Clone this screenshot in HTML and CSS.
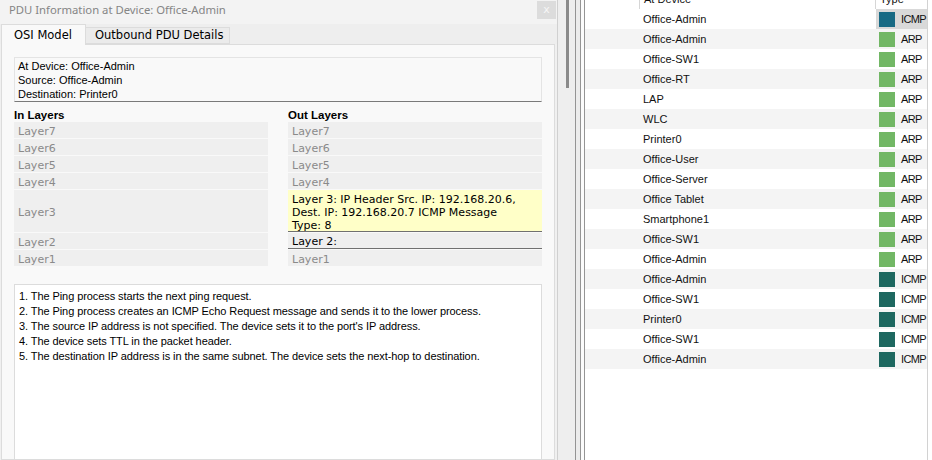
FILE: index.html
```html
<!DOCTYPE html>
<html lang="en">
<head>
<meta charset="utf-8">
<title>PDU Information</title>
<link rel="stylesheet" href="styles.css">
</head>
<body>
<div class="screen">
  <section class="dialog">
    <header class="titlebar">
      <span class="title">PDU Information at Device: Office-Admin</span>
      <button class="close" type="button">x</button>
    </header>
    <nav class="tabs">
      <div class="tab active">OSI Model</div>
      <div class="tab">Outbound PDU Details</div>
    </nav>
    <div class="panel">
      <div class="info">
        <div>At Device: Office-Admin</div>
        <div>Source: Office-Admin</div>
        <div>Destination: Printer0</div>
      </div>
      <div class="layers">
        <div class="col">
          <h3 class="col-title">In Layers</h3>
          <div class="layer">Layer7</div>
          <div class="layer">Layer6</div>
          <div class="layer">Layer5</div>
          <div class="layer">Layer4</div>
          <div class="layer tall">Layer3</div>
          <div class="layer">Layer2</div>
          <div class="layer">Layer1</div>
        </div>
        <div class="col">
          <h3 class="col-title">Out Layers</h3>
          <div class="layer">Layer7</div>
          <div class="layer">Layer6</div>
          <div class="layer">Layer5</div>
          <div class="layer">Layer4</div>
          <div class="layer tall active-3">Layer 3: IP Header Src. IP: 192.168.20.6,<br>Dest. IP: 192.168.20.7 ICMP Message<br>Type: 8</div>
          <div class="layer active-2">Layer 2:</div>
          <div class="layer">Layer1</div>
        </div>
      </div>
      <div class="log">
        <div>1. The Ping process starts the next ping request.</div>
        <div>2. The Ping process creates an ICMP Echo Request message and sends it to the lower process.</div>
        <div>3. The source IP address is not specified. The device sets it to the port's IP address.</div>
        <div>4. The device sets TTL in the packet header.</div>
        <div>5. The destination IP address is in the same subnet. The device sets the next-hop to destination.</div>
      </div>
    </div>
  </section>

  <div class="gutter">
    <div class="track"><div class="thumb"></div></div>
    <div class="rule"></div>
    <div class="pad-a"></div>
    <div class="rule"></div>
    <div class="pad-b"></div>
    <div class="rule"></div>
  </div>

  <section class="events">
    <div class="list">
      <div class="row head"><div class="c1"></div><div class="c2">At Device</div><div class="c3">Type</div></div>
      <div class="row"><div class="c1"></div><div class="c2">Office-Admin</div><div class="c3 sel"><span class="sw icmp-a"></span><span class="t">ICMP</span></div></div>
      <div class="row alt"><div class="c1"></div><div class="c2">Office-Admin</div><div class="c3"><span class="sw arp"></span><span class="t">ARP</span></div></div>
      <div class="row"><div class="c1"></div><div class="c2">Office-SW1</div><div class="c3"><span class="sw arp"></span><span class="t">ARP</span></div></div>
      <div class="row alt"><div class="c1"></div><div class="c2">Office-RT</div><div class="c3"><span class="sw arp"></span><span class="t">ARP</span></div></div>
      <div class="row"><div class="c1"></div><div class="c2">LAP</div><div class="c3"><span class="sw arp"></span><span class="t">ARP</span></div></div>
      <div class="row alt"><div class="c1"></div><div class="c2">WLC</div><div class="c3"><span class="sw arp"></span><span class="t">ARP</span></div></div>
      <div class="row"><div class="c1"></div><div class="c2">Printer0</div><div class="c3"><span class="sw arp"></span><span class="t">ARP</span></div></div>
      <div class="row alt"><div class="c1"></div><div class="c2">Office-User</div><div class="c3"><span class="sw arp"></span><span class="t">ARP</span></div></div>
      <div class="row"><div class="c1"></div><div class="c2">Office-Server</div><div class="c3"><span class="sw arp"></span><span class="t">ARP</span></div></div>
      <div class="row alt"><div class="c1"></div><div class="c2">Office Tablet</div><div class="c3"><span class="sw arp"></span><span class="t">ARP</span></div></div>
      <div class="row"><div class="c1"></div><div class="c2">Smartphone1</div><div class="c3"><span class="sw arp"></span><span class="t">ARP</span></div></div>
      <div class="row alt"><div class="c1"></div><div class="c2">Office-SW1</div><div class="c3"><span class="sw arp"></span><span class="t">ARP</span></div></div>
      <div class="row"><div class="c1"></div><div class="c2">Office-Admin</div><div class="c3"><span class="sw arp"></span><span class="t">ARP</span></div></div>
      <div class="row alt"><div class="c1"></div><div class="c2">Office-Admin</div><div class="c3"><span class="sw icmp"></span><span class="t">ICMP</span></div></div>
      <div class="row"><div class="c1"></div><div class="c2">Office-SW1</div><div class="c3"><span class="sw icmp"></span><span class="t">ICMP</span></div></div>
      <div class="row alt"><div class="c1"></div><div class="c2">Printer0</div><div class="c3"><span class="sw icmp"></span><span class="t">ICMP</span></div></div>
      <div class="row"><div class="c1"></div><div class="c2">Office-SW1</div><div class="c3"><span class="sw icmp"></span><span class="t">ICMP</span></div></div>
      <div class="row alt"><div class="c1"></div><div class="c2">Office-Admin</div><div class="c3"><span class="sw icmp"></span><span class="t">ICMP</span></div></div>
    </div>
  </section>
</div>
</body>
</html>
```

FILE: styles.css
```css
* { box-sizing: border-box; margin: 0; padding: 0; }
html, body { width: 932px; height: 460px; overflow: hidden; background: #fff; }
body { font-family: "Liberation Sans", Arial, sans-serif; font-size: 11px; color: #000; }

.screen { display: flex; height: 460px; }

/* ---------- dialog ---------- */
.dialog {
  width: 558px; flex: none; display: flex; flex-direction: column;
  background: #f0f0f0; border-right: 1px solid #d0d0d0; overflow: hidden;
}
.titlebar {
  height: 24px; flex: none; display: flex; align-items: flex-start;
  justify-content: space-between; background: #f3f3f3; padding: 1px 1px 0 9px;
}
.title { font-family: "Noto Sans", sans-serif; font-size: 11.3px; line-height: 17px; color: #858585; }
.close {
  width: 19px; height: 18px; border: none; background: #dcdcdc; color: #f6f6f6;
  font: 11px/18px "DejaVu Sans", sans-serif;
}

.tabs { height: 20px; flex: none; display: flex; align-items: flex-start; padding-left: 1px; background: #eeeeee; }
.tab {
  font-family: "DejaVu Sans", sans-serif; font-size: 11.5px; color: #000;
  border: 1px solid #dcdcdc; background: #ebebeb;
  height: 17px; line-height: 15px; margin-top: 3px; width: 144px; padding-left: 9px;
  border-left: none;
}
.tab.active {
  position: relative; z-index: 1;
  width: 85px; height: 21px; margin-top: 0; line-height: 20px; padding-left: 12px;
  background: #f9f9f9; border: 1px solid #dcdcdc; border-bottom: none;
}

.panel {
  flex: 1; margin: 0 2px 0 1px; background: #f9f9f9; border: 1px solid #dcdcdc;
  padding: 12px 12px 0 12px; display: flex; flex-direction: column; overflow: hidden;
}
.info {
  border: 1px solid #e4e4e4; border-bottom: 1px solid #7a7a7a;
  padding: 1px 3px 0 3px; line-height: 14px; height: 46px;
}

.layers { display: flex; gap: 20px; margin-top: 6px; }
.col { width: 254px; display: flex; flex-direction: column; gap: 1px; }
.col-title { font-size: 11.5px; font-weight: bold; line-height: 14px; margin-bottom: -1px; }
.layer {
  height: 16px; background: #efefef; color: #8a8a8a;
  font-family: "DejaVu Sans", sans-serif; font-size: 11px; line-height: 16px;
  padding: 2px 0 0 4px;
}
.layer.tall { height: 42px; display: flex; align-items: center; padding-top: 3px; }
.layer.active-3 {
  display: block; background: #ffffc8; color: #000; line-height: 13px; padding-top: 3px;
  border-bottom: 1px solid #707070;
}
.layer.active-2 { color: #000; border-bottom: 1px solid #707070; padding-top: 1px; }

.log {
  margin-top: 18px; height: 200px; flex: none; background: #fff; border: 1px solid #dcdcdc;
  padding: 4px 4px; line-height: 15px; letter-spacing: -0.08px;
}

/* ---------- gutter ---------- */
.gutter { width: 27px; flex: none; display: flex; }
.track { width: 17px; background: #eeeeee; padding-left: 8px; }
.thumb { width: 3px; height: 88px; background: #8a8a8a; }
.rule { width: 1px; background: #949494; }
.pad-a { width: 4px; background: #ececec; }
.pad-b { width: 3px; background: #fbfbfb; }

/* ---------- events ---------- */
.events { flex: 1; background: #fff; display: flex; }
.list { width: 343px; border-right: 1px solid #d2d2d2; }
.row {
  display: grid; grid-template-columns: 54px 236px 52px; height: 20px;
  align-items: stretch; background: #fff;
}
.row.alt { background: #f4f4f4; }
.row.head { margin-top: -11px; }
.c2 { padding-left: 4px; display: flex; align-items: center; white-space: nowrap; color: #111; }
.c3 {
  margin-left: 1px; padding-left: 3px; display: flex; align-items: center; gap: 6px;
  white-space: nowrap; overflow: hidden; color: #111;
}
.t { letter-spacing: -0.6px; }
.head .c2, .head .c3 { border-left: 1px solid #d6d6d6; }
.head .c3 { margin-left: 0; padding-left: 4px; }
.c3.sel { background: #d9d9d9; }
.sw { width: 16px; height: 15px; flex: none; }
.sw.icmp-a { background: #186a84; }
.sw.arp { background: #72b765; }
.sw.icmp { background: #1e6860; }
```
